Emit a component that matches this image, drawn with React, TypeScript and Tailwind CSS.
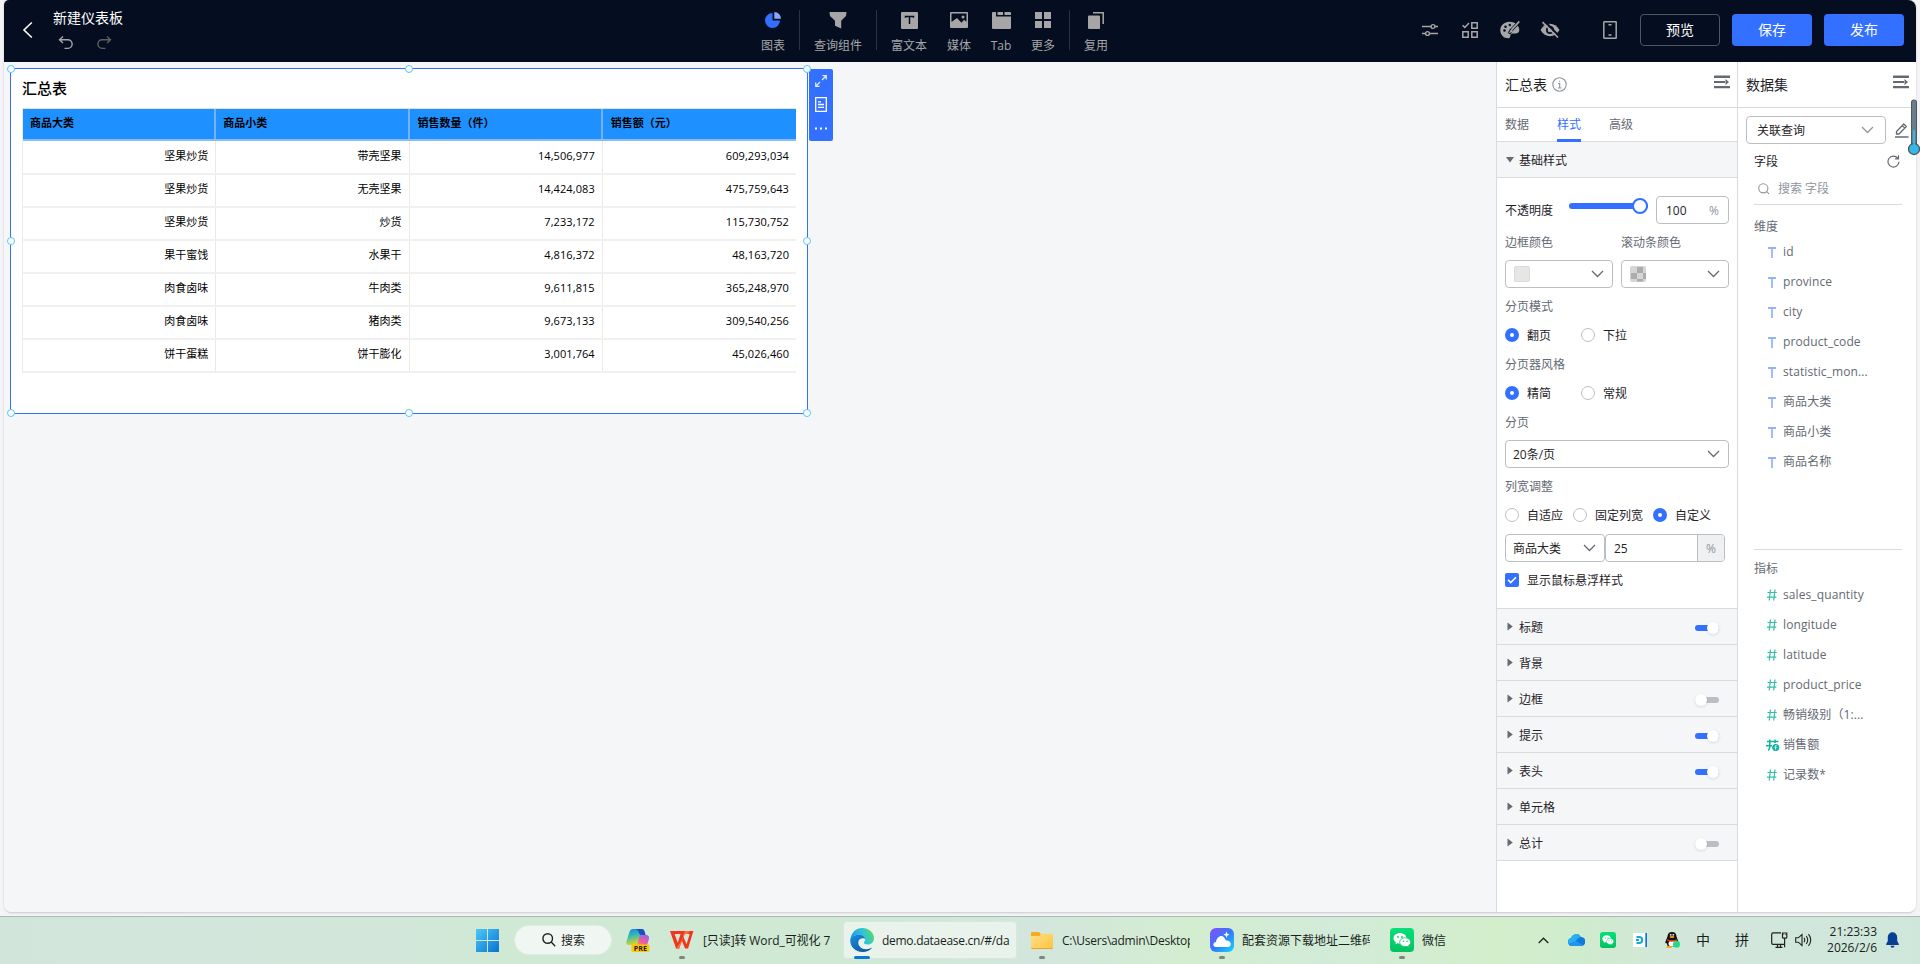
import React from "react";

const FONT = "font-['Open_Sans','Noto_Sans_CJK_SC',sans-serif]";

function HeaderTool({ label, width, children, active }: { label: string; width: string; children: React.ReactNode; active?: boolean }) {
  return (
    <div className={`flex h-full flex-col items-center pt-3 ${width} ${active ? "text-[#3370ff]" : "text-[#a6a6a6]"}`}>
      <div className="flex h-4 items-center justify-center">{children}</div>
      <span className="mt-[9px] text-xs leading-[18px] whitespace-nowrap text-[#a6a6a6]">{label}</span>
    </div>
  );
}

function Divider() {
  return <div className="mt-[10px] h-10 w-px bg-[#2a3140]" />;
}

function Header() {
  return (
    <header className="flex h-[62px] shrink-0 bg-[#050e21]">
      <div className="flex w-[743px] shrink-0">
        <svg className="mt-[21px] ml-[18px]" width="12" height="18" viewBox="0 0 12 18" fill="none" stroke="#fff" strokeWidth="1.6">
          <path d="M9.8 1.5 2 9l7.800 7.500" />
        </svg>
        <div className="ml-[19px] flex flex-col pt-[8px]">
          <span className="text-sm leading-5 text-white">新建仪表板</span>
          <div className="flex gap-[22px] pt-[7px] pl-[5px]">
            <svg width="16" height="16" viewBox="0 0 16 16" fill="none" stroke="#a6a6a6" strokeWidth="1.4">
              <path d="M5 1.500 1.500 4.700 5 8M1.800 4.700h8a4.300 4.300 0 0 1 0 8.700H6.500" />
            </svg>
            <svg width="16" height="16" viewBox="0 0 16 16" fill="none" stroke="#5f5f5f" strokeWidth="1.4">
              <path d="M11 1.500 14.500 4.700 11 8M14.200 4.700h-8a4.300 4.300 0 0 0 0 8.700h3.300" />
            </svg>
          </div>
        </div>
      </div>
      <HeaderTool label="图表" width="w-[52px]" active>
        <svg width="16" height="16" viewBox="0 0 16 16">
          <path d="M7.500 1v7.500H15A7.500 7.500 0 1 1 7.500 1Z" fill="#3370ff" />
          <path d="M9.300 0A6.700 6.700 0 0 1 16 6.700H9.300Z" fill="#85a9ff" />
        </svg>
      </HeaderTool>
      <Divider />
      <HeaderTool label="查询组件" width="w-[76px]">
        <svg width="18" height="17" viewBox="0 0 18 17" fill="#a6a6a6">
          <path d="M1 0h16a.5.5 0 0 1 .5.6L17 4l-4.800 4.800V16.500L6 13.800V8.800L1 4 .5.6A.5.5 0 0 1 1 0Z" />
        </svg>
      </HeaderTool>
      <Divider />
      <HeaderTool label="富文本" width="w-16">
        <svg width="17" height="17" viewBox="0 0 17 17">
          <rect width="17" height="17" rx="1" fill="#a6a6a6" />
          <path d="M4.500 5.800V4.500h8v1.300M8.500 4.500V12" fill="none" stroke="#050e21" strokeWidth="1.5" />
        </svg>
      </HeaderTool>
      <HeaderTool label="媒体" width="w-9">
        <svg width="18" height="16" viewBox="0 0 18 16">
          <rect width="18" height="16" rx="1" fill="#a6a6a6" />
          <path d="M1.500 1.500h15v8.300l-2.500-2-2.500 3L7 6 1.500 10Z" fill="#050e21" />
          <circle cx="13" cy="5" r="1.500" fill="#a6a6a6" />
        </svg>
      </HeaderTool>
      <HeaderTool label="Tab" width="w-12">
        <svg width="19" height="17" viewBox="0 0 19 17" fill="#a6a6a6">
          <path d="M0 1a1 1 0 0 1 1-1h3v4.500h15V16a1 1 0 0 1-1 1H1a1 1 0 0 1-1-1ZM5.500 0H11v3H5.500ZM12.500 0H18a1 1 0 0 1 1 1v2h-6.500Z" />
        </svg>
      </HeaderTool>
      <HeaderTool label="更多" width="w-9">
        <svg width="16" height="16" viewBox="0 0 16 16" fill="#a6a6a6">
          <path d="M0 0h7v7H0ZM9 0h7v7H9ZM0 9h7v7H0ZM9 9h7v7H9Z" />
        </svg>
      </HeaderTool>
      <div className="w-2" />
      <Divider />
      <HeaderTool label="复用" width="w-[52px]">
        <svg width="16" height="17" viewBox="0 0 16 17">
          <rect y="3.500" width="12" height="13.500" rx="1" fill="#a6a6a6" />
          <path d="M5 .8h10.200V12" fill="none" stroke="#a6a6a6" strokeWidth="1.500" />
        </svg>
      </HeaderTool>
      <div className="mr-3 ml-auto flex items-center pb-[2px] text-sm text-white">
        <svg className="mr-6" width="16" height="14" viewBox="0 0 16 14" fill="none" stroke="#a6a6a6" strokeWidth="1.400">
          <path d="M0 3.500h9M13 3.500h3M0 10.500h3.500M7.500 10.500H16" />
          <circle cx="11" cy="3.500" r="1.900" />
          <circle cx="5.500" cy="10.500" r="1.900" />
        </svg>
        <svg className="mr-[22px]" width="16" height="16" viewBox="0 0 16 16" fill="none" stroke="#a6a6a6" strokeWidth="1.500">
          <path d="M.6 3.200 2.800 5.500 7 1M9.800.8h5.400v5.400H9.800ZM.8 9.800h5.400v5.400H.8ZM9.800 9.800h5.400v5.400H9.800Z" />
        </svg>
        <svg className="mr-5" width="20" height="18" viewBox="0 0 20 18">
          <path d="M9.500.8C4.300.8.3 4.500.3 9.200c0 4.600 3.500 8 7.700 8 2.600 0 2-2.200 2.700-3.500.9-1.700 3.200-1 5.300-1.200 2.400-.2 3.300-1.700 3.300-3.500C19.300 4.200 14.600.8 9.500.8Z" fill="#a6a6a6" />
          <g fill="#050e21"><circle cx="4.500" cy="9.500" r="1.300" /><circle cx="5.500" cy="5.700" r="1.300" /><circle cx="9.800" cy="4" r="1.200" /></g>
          <path d="m19 1-8 8.500-1.800 3.200" stroke="#050e21" strokeWidth="3.200" fill="none" />
          <path d="m19.300.5-7.800 8.300" stroke="#a6a6a6" strokeWidth="1.800" fill="none" />
          <path d="M11.200 8.400c1 .3 1.500 1 1.300 1.700-.5 1.500-2 2-4 1.800 1.500-.8 1.300-2.800 2.700-3.500Z" fill="#a6a6a6" />
        </svg>
        <svg className="mr-[43px]" width="20" height="18" viewBox="0 0 20 18">
          <path d="M.5 9C3 4.800 6.200 2.800 10 2.800S17 4.800 19.500 9C17 13.200 13.800 15.200 10 15.200S3 13.200.5 9Z" fill="#a6a6a6" />
          <circle cx="10" cy="9" r="4" fill="#050e21" />
          <circle cx="10" cy="9" r="2.300" fill="#a6a6a6" />
          <path d="m4-.5 14.500 15" stroke="#050e21" strokeWidth="2" />
          <path d="M2.500 1.200 18 16.500" stroke="#a6a6a6" strokeWidth="1.700" />
        </svg>
        <svg className="mr-[23px]" width="14" height="18" viewBox="0 0 14 18" fill="none" stroke="#a6a6a6" strokeWidth="1.500">
          <rect x=".8" y=".8" width="12.400" height="16.400" rx=".5" />
          <path d="M5.500 3.800h3M5.500 14h3" />
        </svg>
        <button className="h-8 w-20 rounded border border-[#50565f]">预览</button>
        <button className="ml-3 h-8 w-20 rounded bg-[#3370ff]">保存</button>
        <button className="ml-3 h-8 w-20 rounded bg-[#3370ff]">发布</button>
      </div>
    </header>
  );
}

const COLUMNS = ["商品大类", "商品小类", "销售数量（件）", "销售额（元）"];
const ROWS = [
  ["坚果炒货", "带壳坚果", "14,506,977", "609,293,034"],
  ["坚果炒货", "无壳坚果", "14,424,083", "475,759,643"],
  ["坚果炒货", "炒货", "7,233,172", "115,730,752"],
  ["果干蜜饯", "水果干", "4,816,372", "48,163,720"],
  ["肉食卤味", "牛肉类", "9,611,815", "365,248,970"],
  ["肉食卤味", "猪肉类", "9,673,133", "309,540,256"],
  ["饼干蛋糕", "饼干膨化", "3,001,764", "45,026,460"],
];

const HANDLES = [
  "-left-[4px] -top-[4px]",
  "left-[394px] -top-[4px]",
  "-right-[4px] -top-[4px]",
  "-left-[4px] top-[168px]",
  "-right-[4px] top-[168px]",
  "-left-[4px] -bottom-[4px]",
  "left-[394px] -bottom-[4px]",
  "-right-[4px] -bottom-[4px]",
];

function SummaryTable() {
  return (
    <div className="relative mt-[6px] ml-[6px] h-[346px] w-[798px] border border-[#3370ff] bg-white">
      <div className="pt-[8px] pl-[11px] text-[15px] leading-[22px] font-medium text-black">汇总表</div>
      <div className="mt-[9px] ml-[11px] w-[774px] border-l border-[#ececea] text-[11px] text-black">
        <div className="grid h-[33px] grid-cols-4 border-t border-b-2 border-t-[#dfe3e2] border-b-[#8bbdf2] bg-[#1e90ff] font-bold">
          {COLUMNS.map((c, i) => (
            <div key={c} className={`flex items-center pb-px whitespace-nowrap ${i < 3 ? "border-r-2 border-[#74b3f3]" : ""} ${i < 2 ? "pl-[7px]" : "pl-[8px]"}`}>{c}</div>
          ))}
        </div>
        {ROWS.map((r, ri) => (
          <div key={ri} className={`grid grid-cols-4 border-b-2 border-[#f0f0f0] ${ri === 0 ? "h-[34px]" : "h-[33px]"}`}>
            {r.map((c, i) => (
              <div key={i} className={`flex items-center justify-end pr-[7px] ${i > 1 ? "tracking-[0.08px]" : ""} ${ri === 0 ? "pb-[2px]" : "pb-[2px]"} ${i < 3 ? "border-r border-[#e9e9e7]" : ""}`}>{c}</div>
            ))}
          </div>
        ))}
      </div>
      {HANDLES.map((h) => (
        <span key={h} className={`absolute z-10 size-2 rounded-full border border-[#59c7f9] bg-white ${h}`} />
      ))}
      <div className="absolute top-0 left-[798px] flex h-[72px] w-6 flex-col items-center rounded-[2px] bg-[#3370ff]">
        <svg className="mt-[6px]" width="12" height="12" viewBox="0 0 12 12" fill="none" stroke="#e4ecff" strokeWidth="1.200">
          <path d="M7.500.7h3.800v3.800M11 1 7 5M4.500 11.300H.7V7.500M1 11l4-4" />
        </svg>
        <svg className="mt-[10px]" width="12" height="15" viewBox="0 0 12 15" fill="none" stroke="#fff" strokeWidth="1.300">
          <path d="M.7.700h10.600v13.600H.7ZM3 4.800h3M3 7.500h6M3 10.300h6" />
        </svg>
        <svg className="mt-[15px]" width="12" height="3" viewBox="0 0 12 3" fill="#fff">
          <path d="M0 .5h2v2H0ZM5 .5h2v2H5ZM10 .5h2v2h-2Z" />
        </svg>
      </div>
    </div>
  );
}

function CollapseIcon({ className }: { className: string }) {
  return (
    <svg className={className} width="16" height="14" viewBox="0 0 16 14" fill="#646a73">
      <path d="M0 .5h16V3H0ZM0 6h11v2H0ZM0 11h16v2.300H0ZM11.500 4 15 7l-3.500 3Z" />
    </svg>
  );
}

function Chevron({ className = "", color = "#646a73" }: { className?: string; color?: string }) {
  return (
    <svg className={className} width="13" height="8" viewBox="0 0 13 8" fill="none" stroke={color} strokeWidth="1.300">
      <path d="m1 1 5.500 5.500L12 1" />
    </svg>
  );
}

function Radio({ label, on, width }: { label: string; on?: boolean; width: string }) {
  return (
    <div className={`flex items-center whitespace-nowrap ${width}`}>
      <span className={`flex size-[14px] shrink-0 items-center justify-center rounded-full ${on ? "bg-[#3370ff]" : "border border-[#bbbfc4] bg-white"}`}>
        {on && <span className="size-1 rounded-full bg-white" />}
      </span>
      <span className="ml-2 pt-px">{label}</span>
    </div>
  );
}

const BOX = "rounded border border-[#bbbfc4] bg-white";

function StyleSection({ label, toggle }: { label: string; toggle?: "on" | "off" }) {
  return (
    <div className="flex h-9 items-center border-t border-[#d9dbdd] bg-[#f5f6f7] pr-[18px] pl-[10px]">
      <svg width="6" height="9" viewBox="0 0 6 9" fill="#646a73"><path d="M.5.500 5.800 4.500.5 8.500Z" /></svg>
      <span className="ml-[6px] pt-[3px]">{label}</span>
      {toggle && (
        <span className={`mt-[3px] ml-auto flex h-[6px] w-6 items-center rounded-full ${toggle === "on" ? "justify-end bg-[#3370ff]" : "bg-[#bbbfc4]"}`}>
          <span className="size-3 shrink-0 rounded-full bg-white shadow-[0_1px_3px_rgba(31,35,41,0.14)]" />
        </span>
      )}
    </div>
  );
}

function StylePanel() {
  return (
    <aside className="flex w-[241px] shrink-0 flex-col border-l border-[#d9dbdd] bg-white text-xs text-[#1f2329]">
      <div className="flex h-[46px] shrink-0 items-center border-b border-[#d9dbdd] pr-[7px] pl-2 text-sm">
        <span>汇总表</span>
        <svg className="ml-[5px]" width="15" height="15" viewBox="0 0 15 15" fill="none" stroke="#8f959e" strokeWidth="1.100">
          <circle cx="7.500" cy="7.500" r="6.700" />
          <path d="M6 6.500h1.700v4.500M5.800 11h3.700M7 4.200h1.200" />
        </svg>
        <CollapseIcon className="mb-[5px] ml-auto" />
      </div>
      <div className="flex h-[34px] shrink-0 gap-7 border-b border-[#d9dbdd] pl-2 text-[#646a73]">
        <span className="pt-[9px]">数据</span>
        <span className="relative pt-[9px] text-[#3370ff] after:absolute after:inset-x-0 after:-bottom-px after:h-[3px] after:bg-[#3370ff]">样式</span>
        <span className="pt-[9px]">高级</span>
      </div>
      <div className="flex h-9 shrink-0 items-center border-b border-[#d9dbdd] bg-[#f5f6f7] pl-[9px]">
        <svg width="8" height="6" viewBox="0 0 8 6" fill="#646a73"><path d="M0 0h8L4 5.500Z" /></svg>
        <span className="ml-[5px] pt-[3px]">基础样式</span>
      </div>
      <div className="flex h-[430px] shrink-0 flex-col px-2 pt-[18px]">
        <div className="flex h-7 items-center">
          <span className="w-16 pt-[2px]">不透明度</span>
          <div className="mb-[8px] flex h-[6px] w-[79px] items-center justify-end rounded-full bg-[#3370ff]">
            <span className="size-4 rounded-full border-2 border-[#3370ff] bg-white" />
          </div>
          <div className={`ml-auto flex h-7 w-[73px] items-center justify-between px-[9px] pt-px ${BOX}`}>
            <span>100</span>
            <span className="text-[#8f959e]">%</span>
          </div>
        </div>
        <div className="flex h-9 items-center pt-[2px] text-[#646a73]">
          <span className="w-[116px]">边框颜色</span>
          <span>滚动条颜色</span>
        </div>
        <div className="flex gap-2">
          <div className={`flex h-7 w-[108px] items-center justify-between px-2 pr-[8px] ${BOX}`}>
            <span className="size-4 rounded-[2px] border border-[#dcdcdc] bg-[#e6e6e5]" />
            <Chevron />
          </div>
          <div className={`flex h-7 w-[108px] items-center justify-between px-2 pr-[8px] ${BOX}`}>
            <svg width="16" height="16" viewBox="0 0 16 16">
              <rect width="16" height="16" rx="2" fill="#d5d5d5" />
              <path d="M7 1h6v6H7ZM1 7h6v6H1ZM13 7h3v6h-3ZM7 13h6v2.500H7Z" fill="#acacac" />
            </svg>
            <Chevron />
          </div>
        </div>
        <div className="flex h-[38px] items-center text-[#646a73]">分页模式</div>
        <div className="flex h-[18px]">
          <Radio label="翻页" on width="w-[76px]" />
          <Radio label="下拉" width="w-[76px]" />
        </div>
        <div className="flex h-[42px] items-center text-[#646a73]">分页器风格</div>
        <div className="flex h-[14px]">
          <Radio label="精简" on width="w-[76px]" />
          <Radio label="常规" width="w-[76px]" />
        </div>
        <div className="flex h-10 items-center pt-[5px] text-[#646a73]">分页</div>
        <div className={`flex h-7 items-center justify-between pr-[8px] pl-[7px] ${BOX}`}>
          <span className="pt-[2px]">20条/页</span>
          <Chevron />
        </div>
        <div className="flex h-[38px] items-center text-[#646a73]">列宽调整</div>
        <div className="flex h-[18px]">
          <Radio label="自适应" width="w-[68px]" />
          <Radio label="固定列宽" width="w-20" />
          <Radio label="自定义" on width="w-[76px]" />
        </div>
        <div className="mt-[10px] flex h-7">
          <div className={`flex w-[100px] items-center justify-between pr-[8px] pl-[7px] ${BOX}`}>
            <span className="pt-px">商品大类</span>
            <Chevron />
          </div>
          <div className="flex w-[120px] items-stretch overflow-hidden rounded border border-[#bbbfc4]">
            <span className="flex flex-1 items-center pt-px pl-2">25</span>
            <span className="flex w-[27px] items-center justify-center border-l border-[#bbbfc4] bg-[#eff0f1] pt-px text-[#8f959e]">%</span>
          </div>
        </div>
        <div className="flex h-9 items-center">
          <span className="flex size-[14px] items-center justify-center rounded-[2px] bg-[#3370ff]">
            <svg width="10" height="8" viewBox="0 0 10 8" fill="none" stroke="#fff" strokeWidth="1.600"><path d="m1 3.800 2.700 2.700L9 1.200" /></svg>
          </span>
          <span className="ml-2 pt-[2px]">显示鼠标悬浮样式</span>
        </div>
      </div>
      <StyleSection label="标题" toggle="on" />
      <StyleSection label="背景" />
      <StyleSection label="边框" toggle="off" />
      <StyleSection label="提示" toggle="on" />
      <StyleSection label="表头" toggle="on" />
      <StyleSection label="单元格" />
      <StyleSection label="总计" toggle="off" />
      <div className="border-t border-[#d9dbdd]" />
    </aside>
  );
}

function Field({ label, kind }: { label: string; kind: "text" | "number" | "calc" }) {
  return (
    <div className="flex h-[30px] items-center pl-[10px] text-[#646a73]">
      <span className="mr-px flex w-[18px] justify-center">
        {kind === "text" && (
          <svg className="mr-[2px]" width="8" height="11" viewBox="0 0 8 11" fill="none">
            <path d="M0 1h8" stroke="#7396fb" strokeWidth="1.500" />
            <path d="M4 1v10" stroke="#94b0ff" strokeWidth="1.700" />
          </svg>
        )}
        {kind === "number" && (
          <svg className="mr-[2px]" width="10" height="12" viewBox="0 0 10 12" fill="none" stroke="#34bfa5" strokeWidth="1.200">
            <path d="M3.500.500 2.200 11.500M8 .500 6.700 11.500M.5 3.500h9.300M0 8.200h9.300" />
          </svg>
        )}
        {kind === "calc" && (
          <svg className="mr-[1px]" width="14" height="12" viewBox="0 0 14 12" fill="none" stroke="#10b59a" strokeWidth="1.500">
            <path d="M3.800.500v7q0 3-1.800 3.700M9 .500v3.500M1 2.500h11.500M0 6.700h6" />
            <circle cx="9.700" cy="8.500" r="3.500" fill="#10b59a" stroke="none" />
            <path d="M10.500 6.500q-1-.3-1 1v3M8.500 8.300h2.300" stroke="#fff" strokeWidth=".9" />
          </svg>
        )}
      </span>
      <span className="pb-px tracking-[0.1px] whitespace-nowrap">{label}</span>
    </div>
  );
}

const DIMENSIONS = ["id", "province", "city", "product_code", "statistic_mon...", "商品大类", "商品小类", "商品名称"];
const MEASURES: [string, "number" | "calc"][] = [
  ["sales_quantity", "number"],
  ["longitude", "number"],
  ["latitude", "number"],
  ["product_price", "number"],
  ["畅销级别（1:...", "number"],
  ["销售额", "calc"],
  ["记录数*", "number"],
];

function DatasetPanel() {
  return (
    <aside className="relative flex flex-1 flex-col border-l border-[#d9dbdd] bg-white text-xs text-[#1f2329]">
      <div className="flex h-[46px] shrink-0 items-center border-b border-[#d9dbdd] pr-[7px] pl-2 text-sm">
        <span>数据集</span>
        <CollapseIcon className="mb-[5px] ml-auto" />
      </div>
      <div className="flex items-center pt-2 pl-2">
        <div className={`flex h-7 w-[140px] items-center justify-between pr-[11px] pl-[10px] ${BOX}`}>
          <span className="pt-px">关联查询</span>
          <Chevron color="#8f959e" />
        </div>
        <svg className="ml-[9px]" width="14" height="15" viewBox="0 0 14 15" fill="none" stroke="#646a73" strokeWidth="1.300">
          <path d="M0 14h13.500M1.500 11V8.500L8.800 1l2.500 2.500L4 11ZM7.300 2.600l2.500 2.500" />
        </svg>
      </div>
      <div className="mr-[14px] ml-4">
        <div className="flex h-[34px] items-center justify-between">
          <span className="pt-[2px]">字段</span>
          <svg className="mr-[2px]" width="13" height="13" viewBox="0 0 13 13" fill="none" stroke="#646a73" strokeWidth="1.200">
            <path d="M10.700 3A5.500 5.500 0 1 0 12 6.800M11.500.300V3.800H8" />
          </svg>
        </div>
        <div className="flex h-[27px] items-center border-b border-[#d9dbdd] pb-[5px] pl-1 text-[#8f959e]">
          <svg width="12" height="12" viewBox="0 0 12 12" fill="none" stroke="#8f959e" strokeWidth="1.100">
            <circle cx="5.300" cy="5.300" r="4.600" /><path d="m8.700 8.700 2.500 2.500" />
          </svg>
          <span className="ml-2">搜索 字段</span>
        </div>
        <div className="flex h-8 items-end pb-[2px] text-[#646a73]">维度</div>
        {DIMENSIONS.map((d) => <Field key={d} label={d} kind="text" />)}
        <div className="h-[73px] border-b border-[#d9dbdd]" />
        <div className="flex h-[30px] items-center pt-[7px] text-[#646a73]">指标</div>
        {MEASURES.map(([m, k]) => <Field key={m} label={m} kind={k} />)}
      </div>
    </aside>
  );
}

function Task({ icon, label, width, textClass }: { icon: React.ReactNode; label: string; width: string; textClass: string }) {
  return (
    <div className={`relative flex h-[38px] shrink-0 items-center ${width}`}>
      <span className="flex w-6 shrink-0 justify-center">{icon}</span>
      <span className={`overflow-hidden pt-px whitespace-nowrap ${textClass}`}>{label}</span>
      <span className="absolute bottom-0 left-[9px] h-[3px] w-[6px] rounded-full bg-[#7b877d]" />
    </div>
  );
}

function WechatGlyph({ size }: { size: number }) {
  return (
    <svg width={size} height={size} viewBox="0 0 24 24">
      <defs><linearGradient id={`wx${size}`} x1="0" y1="0" x2="0" y2="1"><stop offset="0" stopColor="#06e07a" /><stop offset="1" stopColor="#05c160" /></linearGradient></defs>
      <rect width="24" height="24" rx="4" fill={`url(#wx${size})`} />
      <path d="M10 5C6.300 5 3.500 7.300 3.500 10.300c0 1.700.9 3.100 2.400 4.100l-.5 1.900 2.200-1.100c.8.200 1.600.3 2.400.3 3.700 0 6.500-2.300 6.500-5.200S13.700 5 10 5Z" fill="#fff" />
      <path d="M15.200 9.800c-3 0-5.500 1.900-5.500 4.400s2.500 4.400 5.500 4.400c.7 0 1.400-.1 2-.3l1.800.9-.4-1.600c1.200-.8 2-2 2-3.400 0-2.500-2.400-4.400-5.400-4.400Z" fill="#fff" stroke="#07cc69" strokeWidth=".8" />
      <g fill="#07cc69"><circle cx="8" cy="9" r=".9" /><circle cx="12" cy="9" r=".9" /><circle cx="13.500" cy="13.200" r=".75" /><circle cx="17" cy="13.200" r=".75" /></g>
    </svg>
  );
}

function Taskbar() {
  return (
    <footer className="flex h-[48px] shrink-0 items-start border-t border-[#a9bab0] bg-[linear-gradient(90deg,#d2e5db_0%,#d2e6da_20%,#cfe9d4_26%,#cfe9d5_45%,#d3e6dd_54%,#d3edd0_62%,#d1ebd8_69%,#d2eecb_78%,#cfeccd_82%,#d3e6dc_88%,#cfe7db_100%)] pt-[4px] text-xs text-[#1b1f1c]">
      <div className="flex h-[38px] shrink-0 items-center pl-[476px]">
        <svg className="shrink-0" width="23" height="23" viewBox="0 0 23 23">
          <defs><linearGradient id="win" x1="0" y1="0" x2="1" y2="1"><stop offset="0" stopColor="#4cc8f8" /><stop offset="1" stopColor="#0873d0" /></linearGradient></defs>
          <path d="M0 0h11v11H0ZM12 0h11v11H12ZM0 12h11v11H0ZM12 12h11v11H12Z" fill="url(#win)" />
        </svg>
        <div className="ml-[15px] flex h-[30px] w-[98px] shrink-0 items-center rounded-full border border-[#deeee3] bg-[#f0f7f2] pl-[27px]">
          <svg width="14" height="14" viewBox="0 0 14 14" fill="none" stroke="#222" strokeWidth="1.400"><circle cx="5.700" cy="5.500" r="4.800" /><path d="m9.200 9 4 4.200" /></svg>
          <span className="ml-[5px] pt-px">搜索</span>
        </div>
        <svg className="ml-[14px] shrink-0" width="24" height="23" viewBox="0 0 22 23" preserveAspectRatio="none">
          <defs>
            <linearGradient id="cpa" x1="0" y1="0" x2=".3" y2="1"><stop offset="0" stopColor="#1a7fe8" /><stop offset=".45" stopColor="#31bcb5" /><stop offset="1" stopColor="#e0d425" /></linearGradient>
            <linearGradient id="cpb" x1=".8" y1="0" x2=".2" y2="1"><stop offset="0" stopColor="#9b62e8" /><stop offset=".6" stopColor="#ee5f9f" /><stop offset="1" stopColor="#fb9b5b" /></linearGradient>
          </defs>
          <path d="M6.500 0h8c1.700 0 2.300 1.500 2.700 3l.7 3h-4l-1.500 5-1.500 5H3C.5 16 0 14 .7 11.500L3 3.500C3.700 1.300 4.500 0 6.500 0Z" fill="url(#cpa)" />
          <path d="M8 0h6.500c1.700 0 2.300 1.500 2.700 3l.7 3h-4C11 6 13 1 8 0Z" fill="#1752c4" />
          <path d="M12.500 6H18c3 0 3.500 2 2.900 4.500L19 17H8.500c2 0 2.500-3 4-11Z" fill="url(#cpb)" />
          <rect x="5" y="15.500" width="16.500" height="7.500" rx="1.500" fill="#fec50b" />
          <text x="13.200" y="21.700" textAnchor="middle" fontSize="6.500" fontWeight="700" fill="#222">PRE</text>
        </svg>
      </div>
      <div className="flex shrink-0 pl-5">
        <Task
          width="w-[173px]"
          textClass="ml-[9px] tracking-[-0.1px]"
          label="[只读]转 Word_可视化 7"
          icon={
            <svg width="24" height="18" viewBox="0 0 21 17" preserveAspectRatio="none" fill="none">
              <path d="M0 0h20.500l-4.700 16.500h-2.600L10.300 9 8 16.500H5.300Z" fill="#f2361c" />
              <path d="M4 2.800 6.800 11 9.300 2.800ZM11.500 5l3 7.500 2.700-9.700h-4.900Z" fill="#d3e9d7" />
              <path d="M10.300 9 13 0h4l-1.200 2.800h-2.500L11.600 6.500 8 16.500H5.300Z" fill="#ff6a3d" />
            </svg>
          }
        />
      </div>
      <div className="relative flex h-[38px] w-[174px] shrink-0 items-center rounded border border-[#d9e8de] bg-[#e9f3ec] pl-[6px]">
        <svg className="shrink-0" width="24" height="24" viewBox="0 0 24 24">
          <defs>
            <linearGradient id="eg1" x1="0" y1=".3" x2="1" y2="0"><stop offset="0" stopColor="#1f9fe0" /><stop offset=".5" stopColor="#2fc5d8" /><stop offset="1" stopColor="#66e03a" /></linearGradient>
            <linearGradient id="eg2" x1="0" y1="0" x2="1" y2="1"><stop offset="0" stopColor="#1b8fde" /><stop offset="1" stopColor="#0b4b98" /></linearGradient>
          </defs>
          <path d="M.5 11C1.300 4.500 6.200 0 12.200 0 18.800 0 24 4.700 24 10.200c0 3.800-2.700 6.300-6 6.300-2.500 0-4.300-1-4-2 .2-.7 1.200-1.300 1.200-3C15.200 9 12.600 6.800 9 6.800c-3.700 0-6.800 1.800-8.500 4.200Z" fill="url(#eg1)" />
          <path d="M.2 12.500C.2 9 4.500 6.800 9 6.800c3.600 0 6 2 6.200 4.500C14 9.500 8.800 9.800 8.300 14c-.5 4 3.400 7.500 8.200 7.200 2.500-.1 4.500-1 6-2C20.500 22 16.800 24 12.500 24 5.500 24 .2 18.800.2 12.500Z" fill="url(#eg2)" />
        </svg>
        <span className="ml-[8px] pt-px tracking-[-0.28px] whitespace-nowrap">demo.dataease.cn/#/da</span>
        <span className="absolute -bottom-px left-[10px] h-[3px] w-4 rounded-full bg-[#0c76d6]" />
      </div>
      <div className="flex shrink-0 pl-[13px]">
        <Task
          width="w-[180px]"
          textClass="ml-2 w-[128px] tracking-[-0.25px]"
          label="C:\Users\admin\Desktop"
          icon={
            <svg width="22" height="17" viewBox="0 0 22 17">
              <defs><linearGradient id="fd" x1="0" y1="0" x2="1" y2="1"><stop offset="0" stopColor="#ffe08a" /><stop offset="1" stopColor="#fcc43c" /></linearGradient></defs>
              <path d="M0 1a1 1 0 0 1 1-1h7l2 2.200V5H0Z" fill="#f5ac18" />
              <path d="M0 4h8.500L10 1.800h10.800A1.200 1.200 0 0 1 22 3v13a1 1 0 0 1-1 1H1a1 1 0 0 1-1-1Z" fill="url(#fd)" />
              <path d="M.5 16.500h21" stroke="#e7a62b" />
            </svg>
          }
        />
        <Task
          width="w-[180px]"
          textClass="ml-2 w-[128px]"
          label="配套资源下载地址二维码"
          icon={
            <svg width="24" height="24" viewBox="0 0 24 24">
              <defs><linearGradient id="cl" x1="0" y1="0" x2="1" y2="1"><stop offset="0" stopColor="#8a4dfa" /><stop offset=".5" stopColor="#3479fa" /><stop offset="1" stopColor="#11d8ff" /></linearGradient></defs>
              <rect width="24" height="24" rx="6" fill="url(#cl)" />
              <path d="M6 19c-3.500 0-3.500-4.500 0-5 .5-3.500 3-6 5.300-6 2 0 3.500 2 4.500 4.500 2.700-.5 5 1.500 5 3.500S19.500 19 18 19Z" fill="#fff" />
              <path d="m16.500 3.500.9 2.300 2.300.9-2.300.9-.9 2.300-.9-2.300-2.300-.9 2.300-.9Z" fill="#fff" />
            </svg>
          }
        />
        <Task width="w-[64px]" textClass="ml-2" label="微信" icon={<WechatGlyph size={24} />} />
      </div>
      <div className="ml-auto flex h-[38px] shrink-0 items-center pr-[21px]">
        <svg width="11" height="7" viewBox="0 0 11 7" fill="none" stroke="#222" strokeWidth="1.300"><path d="m.7 6 4.800-4.800L10.300 6" /></svg>
        <svg className="ml-[19px]" width="17" height="12" viewBox="0 0 17 12">
          <path d="M4 12a4 4 0 0 1-.8-7.900A5.200 5.200 0 0 1 12.900 3 4.500 4.500 0 0 1 13 12Z" fill="#1479dc" />
          <path d="M3.200 4.100A5.200 5.200 0 0 1 12.900 3c-3 .3-4 3.500-6.500 5L1 10C-1 7 .8 4.300 3.200 4.100Z" fill="#28b0f2" />
          <path d="M1.200 10.500 8 7l7 4.300a4 4 0 0 1-2 .7H4a4 4 0 0 1-2.800-1.500Z" fill="#1f95ee" />
        </svg>
        <span className="ml-[15px]"><WechatGlyph size={16} /></span>
        <svg className="ml-[17px]" width="14" height="14" viewBox="0 0 14 14">
          <rect width="14" height="14" rx="1" fill="#fff" />
          <rect x="12.300" width="1.700" height="14" fill="#1971e6" />
          <path d="M3.500 4h2.700a3 3 0 0 1 0 6H3.500M3 7h3" fill="none" stroke="#16a7e0" strokeWidth="2" />
        </svg>
        <svg className="ml-[18px]" width="15" height="16" viewBox="0 0 15 16">
          <path d="M7 0c3 0 4.500 2 4.500 4.500L13.500 10c.3 1.500-.5 1.700-1 1L11 14.500H3L1.500 11c-.8.700-1.500.2-1-1.500l2-5C2.500 2 4 0 7 0Z" fill="#16110f" />
          <ellipse cx="7" cy="11.500" rx="3.500" ry="3" fill="#fff" />
          <path d="M2.300 7.200q4.700 2 9.400 0l.3 1.600q-5 2-10 0Z" fill="#e62a22" />
          <ellipse cx="7" cy="5" rx="2.500" ry="1" fill="#f6a312" />
          <circle cx="5.700" cy="2.800" r=".9" fill="#fff" /><circle cx="8.300" cy="2.800" r=".9" fill="#fff" />
          <path d="M1.500 15.200q2.500-2 5 0Z" fill="#f3a112" stroke="#f3a112" />
          <circle cx="11.500" cy="12.300" r="3.500" fill="#21dc84" />
        </svg>
        <span className="ml-[16px] w-[14px] text-[14px]">中</span>
        <span className="ml-[25px] w-[14px] text-[14px]">拼</span>
        <svg className="ml-[22px]" width="17" height="16" viewBox="0 0 17 16" fill="none" stroke="#222" strokeWidth="1.200">
          <path d="M10 .8H2A1.300 1.300 0 0 0 .7 2v9A1.300 1.300 0 0 0 2 12.300h11M4.500 15.300h7M6.500 12.500v2.700M9.500 12.500v2.700M11.500 1h4.300v4.200a1 1 0 0 1-1 1h-2.300a1 1 0 0 1-1-1ZM13.600 6.200v9M12.500 2.500h.6M14.300 2.500h.6" />
        </svg>
        <svg className="ml-[7px]" width="17" height="14" viewBox="0 0 17 14" fill="none" stroke="#222" strokeWidth="1.100">
          <path d="M.7 4.800v4.400h2.600L7 12.500V1.500L3.300 4.800ZM9 4.800q1.500 2.200 0 4.400M11.300 3q2.800 4 0 8M13.500 1.200q4.500 5.800 0 11.600" />
        </svg>
        <div className="ml-[15px] flex w-[50px] flex-col items-end leading-4"><span>21:23:33</span><span>2026/2/6</span></div>
        <svg className="ml-[9px]" width="13" height="16" viewBox="0 0 13 16" fill="#073f93">
          <path d="M6.500.300a4.700 4.700 0 0 1 4.700 4.700v4l1.600 3v1H.2v-1l1.600-3V5A4.700 4.700 0 0 1 6.500.300ZM4.500 13.800h4a2 2 0 0 1-4 0Z" />
        </svg>
      </div>
    </footer>
  );
}

export default function App() {
  return (
    <div className={`relative flex h-[964px] w-[1920px] flex-col overflow-hidden bg-[#f4f4f6] ${FONT}`}>
      <div className="mx-1 flex h-[913px] shrink-0 flex-col overflow-hidden rounded-[8px] rounded-tl-[5px] border-b border-[#d3d5d6] bg-[#f5f6f7] shadow-[0_0_2px_rgba(0,0,0,0.2)]">
        <Header />
        <div className="flex flex-1">
          <main className="w-[1492px] shrink-0 bg-[#f5f6f8]"><SummaryTable /></main>
          <StylePanel />
          <DatasetPanel />
        </div>
      </div>
      <div className="h-[3px] shrink-0" />
      <Taskbar />
      <svg className="absolute top-[99px] left-[1908px]" width="12" height="57" viewBox="0 0 12 57">
        <rect x="3.500" y="1" width="5" height="48" rx="2" fill="#6c7d87" stroke="#4b5a63" />
        <circle cx="6" cy="50" r="5.500" fill="#35b8e6" stroke="#4b5a63" strokeWidth="1.300" />
        <rect x="5" y="31" width="2" height="19" fill="#35b8e6" />
      </svg>
    </div>
  );
}
